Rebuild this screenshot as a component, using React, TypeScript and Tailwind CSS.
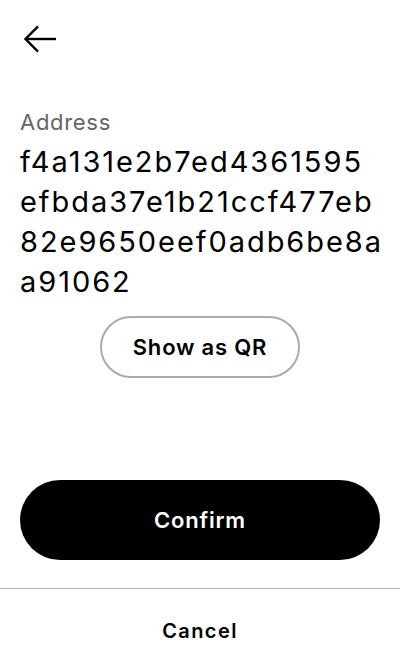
import { useState } from 'react';

// address shown in fixed chunks so it wraps the same way every time
const ADDRESS_LINES = ['f4a131e2b7ed4361595', 'efbda37e1b21ccf477eb', '82e9650eef0adb6be8a', 'a91062'];

export default function App() {
  const [showQr, setShowQr] = useState(false);

  return (
    <div className="w-[400px] h-[672px] bg-white flex flex-col font-['Inter',sans-serif] text-black">
      <div className="px-5 pt-[19px]">
        <button className="w-10 h-10 flex items-center" aria-label="Back">
          <svg width="40" height="34" viewBox="0 0 40 34" fill="none" stroke="black" strokeWidth="2.4">
            <path d="M36 17H6" />
            <path d="M18 4.3L5.5 17L18 29.7" />
          </svg>
        </button>
      </div>

      <div className="px-5 pt-[49px]">
        <p className="text-[22px] leading-7 tracking-[0.7px] text-[#666]">Address</p>
        <p className="mt-[6px] text-[29px] leading-[40px] tracking-[1.95px] whitespace-nowrap">
          {ADDRESS_LINES.map(line => (
            <span key={line} className="block">{line}</span>
          ))}
        </p>
        <div className="flex justify-center mt-[14px]">
          <button
            onClick={() => setShowQr(!showQr)}
            className="w-[200px] h-[62px] rounded-full border-2 border-[#aaa] text-[22px] tracking-[0.8px] font-semibold"
          >
            Show as QR
          </button>
        </div>
      </div>

      <div className="mt-auto px-5">
        <button className="w-full h-20 rounded-full bg-black text-white text-[22px] tracking-[0.8px] font-semibold">
          Confirm
        </button>
      </div>
      <div className="mt-7 border-t border-[#bbb]">
        <button className="w-full h-[83px] text-[20px] tracking-[1.4px] font-semibold">Cancel</button>
      </div>
    </div>
  );
}
